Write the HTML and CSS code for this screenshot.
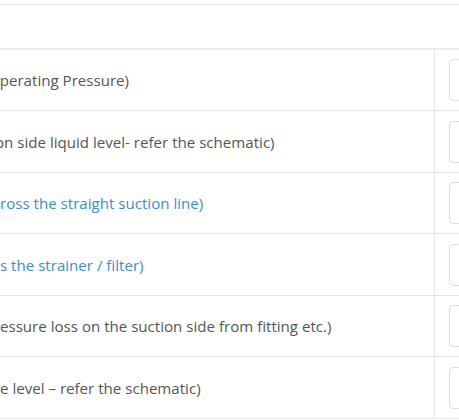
FILE: index.html
```html
<!DOCTYPE html>
<html lang="en">
<head>
  <meta charset="UTF-8" />
  <meta name="viewport" content="width=device-width, initial-scale=1.0"/>
  <title>Suction Head Calculator</title>
  <link rel="stylesheet" href="styles.css">
</head>
<body>
  <div class="sheet">
    <table class="calc">
      <thead>
        <tr>
          <th class="label-col"></th>
          <th class="value-col"></th>
        </tr>
      </thead>
      <tbody>
        <tr>
          <td class="label cut-o">Operating Pressure)</td>
          <td class="value"><input type="text" /></td>
        </tr>
        <tr>
          <td class="label cut-on">on side liquid level- refer the schematic)</td>
          <td class="value"><input type="text" /></td>
        </tr>
        <tr>
          <td class="label link cut-r">ross the straight suction line)</td>
          <td class="value"><input type="text" /></td>
        </tr>
        <tr>
          <td class="label link cut-s">s the strainer / filter)</td>
          <td class="value"><input type="text" /></td>
        </tr>
        <tr>
          <td class="label">essure loss on the suction side from fitting etc.)</td>
          <td class="value"><input type="text" /></td>
        </tr>
        <tr>
          <td class="label">e level – refer the schematic)</td>
          <td class="value"><input type="text" /></td>
        </tr>
      </tbody>
    </table>
  </div>
</body>
</html>
```

FILE: styles.css
```css
body {
  margin: 0;
  overflow: hidden;
  font-family: "Open Sans", Arial, sans-serif;
  font-size: 15.1px;
  color: #555555;
  background-color: #ffffff;
}

.sheet {
  padding-top: 4px;
}

.calc {
  width: 560px;
  border-collapse: collapse;
  table-layout: fixed;
}

.calc th {
  height: 43px;
  padding: 0;
  border-top: 1px solid #e8e8e8;
  border-bottom: 2px solid #ececec;
}

.label-col {
  width: 434px;
}

.calc td {
  height: 60px;
  padding: 0;
  border-bottom: 1px solid #e4e4e4;
  vertical-align: middle;
}

.calc tr:nth-child(even) td {
  height: 61px;
}

.calc .value {
  border-left: 1px solid #e4e4e4;
  padding-left: 14px;
}

.label {
  white-space: nowrap;
  overflow: hidden;
}

.link {
  color: #3a8dd3;
}

/* first glyph of each label sits partly off the left edge */
.cut-o { text-indent: -12px; }
.cut-on { text-indent: -5px; }
.cut-r { text-indent: 0; }
.cut-s { text-indent: 0; }

input {
  box-sizing: border-box;
  width: 200px;
  height: 42px;
  padding: 6px 12px;
  border: 1px solid #dddddd;
  border-radius: 4px;
  font-family: inherit;
  font-size: 15px;
  color: #555555;
}
```
